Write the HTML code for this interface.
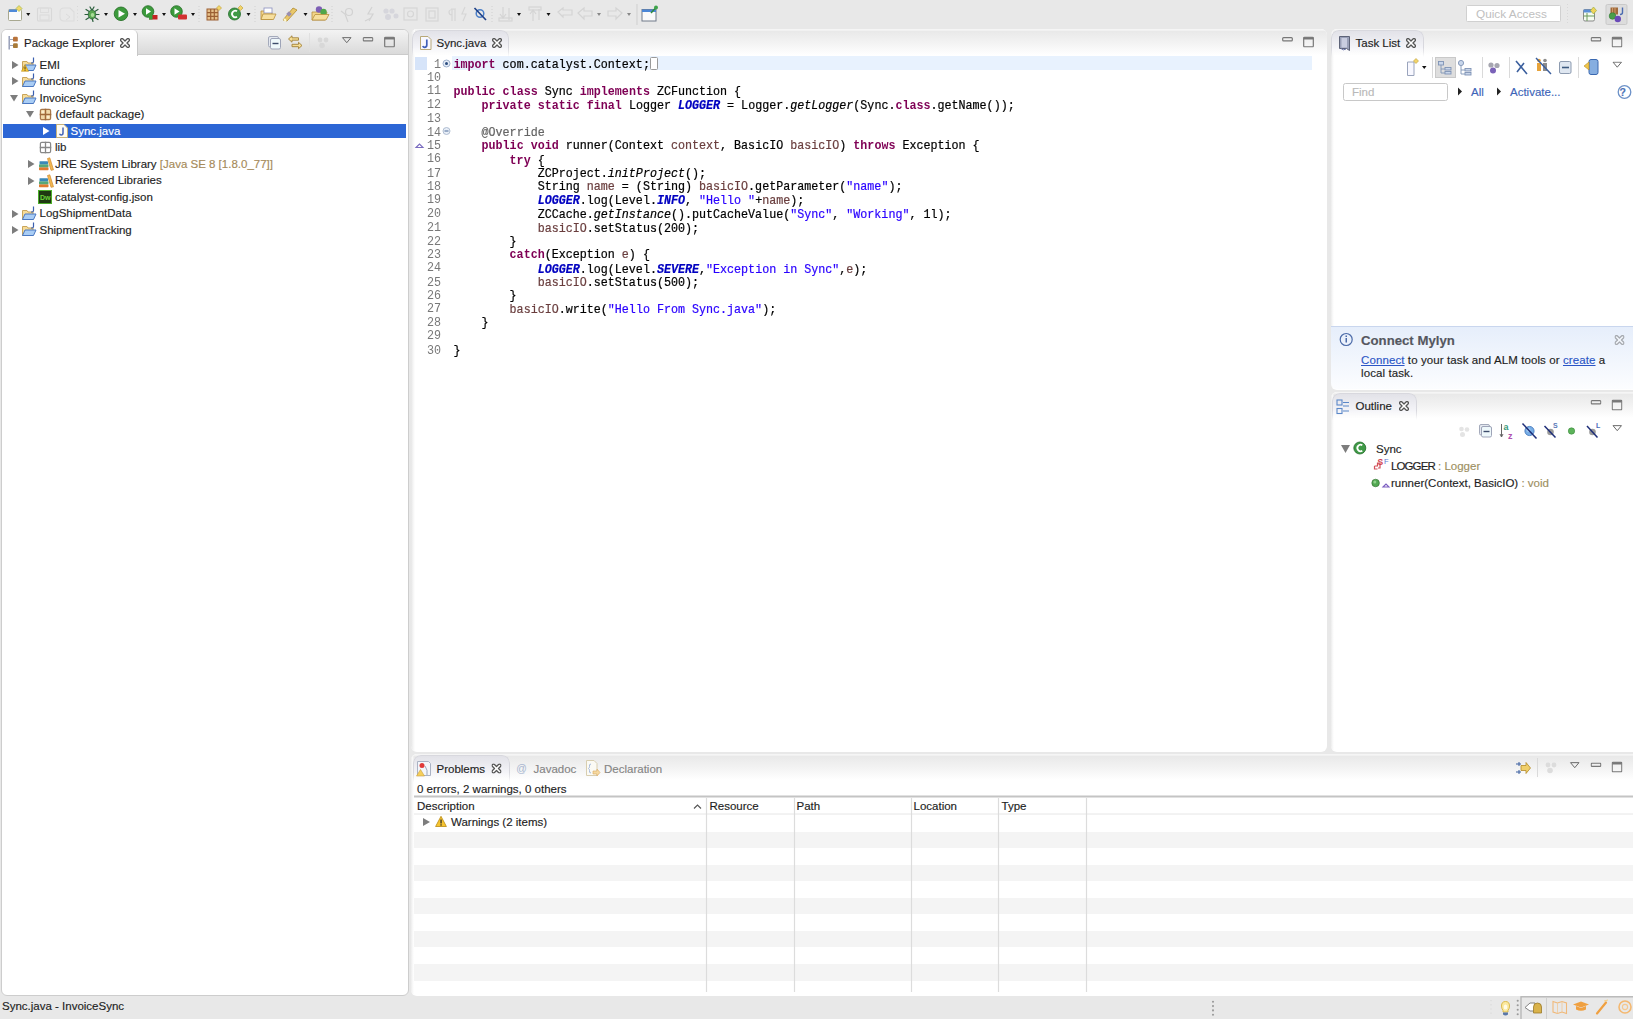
<!DOCTYPE html>
<html><head><meta charset="utf-8">
<style>
*{margin:0;padding:0;box-sizing:border-box}
html,body{width:1633px;height:1019px;overflow:hidden;background:#e8e8e8;font-family:"Liberation Sans",sans-serif;font-size:11.5px;color:#1e1e1e;position:relative}
.a{position:absolute}
.t{position:absolute;white-space:pre;line-height:14px;-webkit-text-stroke:0.15px currentColor}
.panel{position:absolute;background:#fff;border-radius:6px;overflow:hidden}
.code{position:absolute;font-family:"Liberation Mono",monospace;font-size:11.7px;line-height:12.382px;white-space:pre;color:#000;transform:scaleY(1.1);transform-origin:0 0;-webkit-text-stroke:0.2px currentColor}
.ln{position:absolute;font-family:"Liberation Mono",monospace;font-size:11.7px;line-height:12.382px;white-space:pre;color:#787878;text-align:right;transform:scaleY(1.1);transform-origin:0 0}
.k{color:#7f0055;font-weight:bold;-webkit-text-stroke:0}
.s{color:#2a00ff}
.f{color:#0000c0;font-weight:bold;font-style:italic}
.i{font-style:italic}
.v{color:#6a3e3e}
.an{color:#646464}
</style></head><body>

<svg width="0" height="0" style="position:absolute">
<defs>
<symbol id="tri-r" viewBox="0 0 8 8"><path d="M1 0 L7.5 4 L1 8Z" fill="#7d7d7d"/></symbol>
<symbol id="tri-d" viewBox="0 0 8 8"><path d="M0 1 L8 1 L4 7.5Z" fill="#7d7d7d"/></symbol>
<symbol id="proj" viewBox="0 0 16 16">
 <path d="M1.5 4.5 L1.5 13.5 L12 13.5 L12 6 L7 6 L6 4.5Z" fill="#f6dc9a" stroke="#c9a55a" stroke-width="1"/>
 <path d="M1.5 13.5 L4 8 L15 8 L12.5 13.5Z" fill="#a9cdf5" stroke="#4a78c2" stroke-width="1"/>
 <path d="M12.5 0.5 L12.5 4.5 Q12.5 6 11 6 L10 6" fill="none" stroke="#3a5fb0" stroke-width="1.2"/>
</symbol>
<symbol id="pkg" viewBox="0 0 14 14">
 <rect x="1.5" y="1.5" width="11" height="11" rx="1.5" fill="#f0d8a8" stroke="#a8784a" stroke-width="1.3"/>
 <path d="M7 0.8 V13.2 M0.8 7 H13.2" stroke="#a06a3a" stroke-width="1.6"/>
 <rect x="3" y="3" width="2.6" height="2.6" fill="#fbeccc"/><rect x="8.4" y="8.4" width="2.6" height="2.6" fill="#fbeccc"/>
</symbol>
<symbol id="jfile" viewBox="0 0 12 14">
 <path d="M0.5 0.5 H8 L11.5 4 V13.5 H0.5Z" fill="#fdfbf2" stroke="#c8b27a"/>
 <path d="M7 3.5 V9 Q7 11 5.2 11 Q4 11 3.5 9.8" fill="none" stroke="#4163b8" stroke-width="1.5"/>
</symbol>
<symbol id="grid" viewBox="0 0 14 14">
 <rect x="1.5" y="1.5" width="11" height="11" rx="1.5" fill="#fff" stroke="#888" stroke-width="1.3"/>
 <path d="M7 0.8 V13.2 M0.8 7 H13.2" stroke="#888" stroke-width="1.4"/>
</symbol>
<symbol id="lib" viewBox="0 0 16 14">
 <rect x="1" y="10.2" width="9.5" height="3" rx="0.6" fill="#e07a30"/>
 <rect x="1" y="7.2" width="9.5" height="3" rx="0.6" fill="#58a878"/>
 <rect x="1.5" y="4.2" width="8.5" height="3" rx="0.6" fill="#3a88b8"/>
 <path d="M9.5 1.5 L11.8 0.8 L15.5 12.8 L13 13.3Z" fill="#f2b850" stroke="#d08a30" stroke-width="0.7"/>
</symbol>
<symbol id="dw" viewBox="0 0 14 14">
 <rect x="0.5" y="0.5" width="13" height="13" fill="#1f3a12" stroke="#4cae2a"/>
 <text x="2" y="10" font-size="7" fill="#6bd43a" font-family="Liberation Sans" font-weight="bold">Dw</text>
</symbol>
<symbol id="warn" viewBox="0 0 12 12">
 <path d="M6 0.8 L11.4 11 L0.6 11Z" fill="#f7c531" stroke="#b98a12" stroke-width="0.8"/>
 <rect x="5.4" y="4" width="1.3" height="4" fill="#2b2b2b"/><rect x="5.4" y="8.8" width="1.3" height="1.3" fill="#2b2b2b"/>
</symbol>
<symbol id="closex" viewBox="0 0 10 10">
 <path d="M3.02 5 L1.01 2.99 A1.4 1.4 0 0 1 2.99 1.01 L5 3.02 L7.01 1.01 A1.4 1.4 0 0 1 8.99 2.99 L6.98 5 L8.99 7.01 A1.4 1.4 0 0 1 7.01 8.99 L5 6.98 L2.99 8.99 A1.4 1.4 0 0 1 1.01 7.01Z" fill="#fff" stroke="#555" stroke-width="1.3" stroke-linejoin="round"/>
</symbol>
<symbol id="minb" viewBox="0 0 12 6"><rect x="0.75" y="0.75" width="10.5" height="3.5" rx="1" fill="none" stroke="#777" stroke-width="1.3"/></symbol>
<symbol id="maxb" viewBox="0 0 12 12"><rect x="0.75" y="0.75" width="10.5" height="10.5" rx="1" fill="none" stroke="#777" stroke-width="1.3"/><rect x="0.75" y="0.75" width="10.5" height="2.5" fill="#777"/></symbol>
<symbol id="menutri" viewBox="0 0 12 8"><path d="M0.8 0.8 H11.2 L6 7Z" fill="none" stroke="#666" stroke-width="1.2"/></symbol>
</defs></svg>
<!-- TOOLBAR -->
<svg class="a" style="left:0;top:0" width="1633" height="29" viewBox="0 0 1633 29">
 <g id="tbicons">
 <!-- new -->
 <rect x="8.5" y="9.5" width="13" height="11" rx="1" fill="#fbfbfb" stroke="#a8a890"/>
 <rect x="9" y="9.5" width="8" height="2.5" fill="#4f8ad8"/>
 <path d="M19 5.5 L22 8.5 L19 11.5 L16 8.5Z" fill="#f2d86a" stroke="#9fba4a" stroke-width="0.7"/>
 <path d="M26.2 13 H30.3 L28.25 16Z" fill="#111"/>
 <!-- save disabled -->
 <rect x="37.5" y="8" width="14" height="13" rx="1" fill="none" stroke="#d8d8d8" stroke-width="1.1"/>
 <rect x="40.5" y="8" width="8" height="4.5" fill="none" stroke="#dcdcdc" stroke-width="0.9"/>
 <rect x="40" y="15" width="9" height="5" fill="none" stroke="#dadada" stroke-width="0.9"/>
 <path d="M60 12 Q60 8 64 8 L70 8 L74 12 L74 21 L64 21 Q60 21 60 17Z" fill="none" stroke="#dcdcdc" stroke-width="1.1"/>
 <path d="M66 14 L70 17 L66 20" fill="none" stroke="#dcdcdc" stroke-width="1"/>
 <path d="M77.5 6 V23" stroke="#d8d8d8" stroke-dasharray="1 2.5"/>
 <!-- debug -->
 <g stroke="#2a5e3c" stroke-width="1.2" stroke-linecap="round"><path d="M86 9.5 L90 12 M98 9.5 L94 12 M85 14.5 H89 M99 14.5 H95 M86 19.5 L90 17 M98 19.5 L94 17 M90 7 L91.5 9.5 M94 7 L92.5 9.5 M92 18 L93 21.5"/></g>
 <ellipse cx="92" cy="14.5" rx="3.8" ry="4.5" fill="#58a650" stroke="#2a5e3c" stroke-width="0.8"/>
 <ellipse cx="92.5" cy="15" rx="1.8" ry="2" fill="#a8dc98"/>
 <path d="M104 13 H108 L106 16Z" fill="#111"/>
 <!-- run -->
 <circle cx="121" cy="13.8" r="6.8" fill="#3c9a3c" stroke="#1f6b1f" stroke-width="0.8"/>
 <path d="M118.5 10 L125 13.8 L118.5 17.6Z" fill="#fff"/>
 <path d="M133 13 H137 L135 16Z" fill="#111"/>
 <!-- coverage -->
 <circle cx="148" cy="11.5" r="5.8" fill="#3c9a3c" stroke="#1f6b1f" stroke-width="0.8"/>
 <path d="M146 8.3 L151 11.5 L146 14.7Z" fill="#fff"/>
 <rect x="149" y="15" width="8.5" height="4.5" fill="#c42222"/><rect x="149" y="15" width="3.5" height="4.5" fill="#3aa03a"/>
 <path d="M162 13 H166 L164 16Z" fill="#111"/>
 <!-- ext tools -->
 <circle cx="176.5" cy="11.5" r="5.8" fill="#3c9a3c" stroke="#1f6b1f" stroke-width="0.8"/>
 <path d="M174.5 8.3 L179.5 11.5 L174.5 14.7Z" fill="#fff"/>
 <rect x="178" y="14.5" width="9" height="5" rx="1" fill="#d23030"/>
 <path d="M191 13 H195 L193 16Z" fill="#111"/>
 <path d="M199 6 V23" stroke="#d0d0d0" stroke-dasharray="1 2"/>
 <!-- new package -->
 <rect x="207" y="9" width="11" height="11" fill="#e6c08a" stroke="#9b5f33"/>
 <path d="M210.7 9 V20 M214.3 9 V20 M207 12.7 H218 M207 16.3 H218" stroke="#9b5f33" stroke-width="1.2"/>
 <path d="M219 5.5 L221.5 8 L219 10.5 L216.5 8Z" fill="#f3d46a" stroke="#b89a2e" stroke-width="0.6"/>
 <!-- new class -->
 <circle cx="234.5" cy="14" r="6" fill="#3f9a46" stroke="#226b2a" stroke-width="0.8"/>
 <path d="M237 11.3 A3.2 3.2 0 1 0 237 16.7" fill="none" stroke="#fff" stroke-width="1.8"/>
 <path d="M240.5 5.5 L243 8 L240.5 10.5 L238 8Z" fill="#f3d46a" stroke="#b89a2e" stroke-width="0.6"/>
 <path d="M246.5 13 H250.5 L248.5 16Z" fill="#111"/>
 <path d="M255 6 V23" stroke="#d0d0d0" stroke-dasharray="1 2"/>
 <!-- open type -->
 <path d="M261 11 L265 11 L266 12.5 L272 12.5 L272 19.5 L261 19.5Z" fill="#f4d58a" stroke="#b8913c" stroke-width="0.8"/>
 <rect x="264" y="8" width="8" height="5" fill="#fff" stroke="#8a8fbf" stroke-width="0.8"/>
 <path d="M261 19.5 L263 14 L276 14 L273.5 19.5Z" fill="#f7df9e" stroke="#b8913c" stroke-width="0.8"/>
 <!-- search -->
 <path d="M283 20 L293 8 L297 10 L287 21Z" fill="#e9c76a" stroke="#b08a2c" stroke-width="0.8"/>
 <rect x="287" y="12" width="4" height="4" fill="#9a8fb0" transform="rotate(45 289 14)"/>
 <path d="M284 19 L286 21" stroke="#fffbd0" stroke-width="2"/>
 <path d="M303.5 13 H307.5 L305.5 16Z" fill="#111"/>
 <!-- open task -->
 <path d="M312 12 L327 12 L325 20 L312 20Z" fill="#f4d58a" stroke="#b8913c" stroke-width="0.8"/>
 <circle cx="319" cy="9.5" r="3.2" fill="#7d5fb5"/><circle cx="323.5" cy="12" r="3.2" fill="#4fa74a"/>
 <path d="M312 20 L315 14.5 L329 14.5 L326 20Z" fill="#f7df9e" stroke="#b8913c" stroke-width="0.8"/>
 <path d="M332 6 V23" stroke="#d0d0d0" stroke-dasharray="1 2"/>
 <!-- disabled group -->
 <g fill="none" stroke="#d2d2d2" stroke-width="1.2">
  <circle cx="349" cy="12" r="3.5"/><path d="M341 11 L345 14 L348 22"/>
  <path d="M372 7 L368 14 L373 14 L369 21"/><path d="M365 21 L371 18"/>
 </g>
 <g fill="#d6d6dc"><circle cx="386" cy="11" r="2.6"/><circle cx="392" cy="11" r="2.6"/><circle cx="388" cy="17" r="3"/><circle cx="396" cy="16" r="2.5"/></g>
 <g fill="none" stroke="#d6d6d6" stroke-width="1.2">
  <rect x="404" y="8" width="13" height="12"/><circle cx="410.5" cy="14" r="3"/>
  <rect x="426" y="8" width="12" height="13"/><rect x="429" y="11" width="6" height="7"/>
  <path d="M452 9 V21 M455 9 V21 M451 9 H456 Q449 9 449 12 Q449 15 452 15"/>
  <path d="M465 7 L462 14 L466 14 L463 21"/>
 </g>
 <!-- blue crossed -->
 <circle cx="480" cy="13.5" r="3.8" fill="none" stroke="#4a7fc8" stroke-width="1.5"/>
 <path d="M474.5 8 L486 20" stroke="#1d3f86" stroke-width="1.6"/>
 <path d="M492 6 V23" stroke="#d0d0d0" stroke-dasharray="1 2"/>
 <g fill="none" stroke="#d4d4d4" stroke-width="1.2">
  <path d="M503 7 V17 M500 14 L503 18 L506 14"/><rect x="499" y="18" width="13" height="3"/><path d="M509 8 V20"/>
  <path d="M533 21 V11 M530 14 L533 10 L536 14"/><rect x="529" y="7" width="12" height="3"/><path d="M539 9 V20"/>
  <path d="M558 12 L563 8 L563 10 L572 10 L572 15 L563 15 L563 17Z"/>
  <path d="M578 13 L584 8 L584 11 L592 11 L592 16 L584 16 L584 19Z"/>
  <path d="M622 13 L616 8 L616 11 L608 11 L608 16 L616 16 L616 19Z"/>
 </g>
 <path d="M517 13 H521 L519 16Z" fill="#111"/>
 <path d="M546.5 13 H550.5 L548.5 16Z" fill="#111"/>
 <path d="M597 13 H601 L599 16Z" fill="#888"/>
 <path d="M627 13 H631 L629 16Z" fill="#888"/>
 <path d="M637 4 V25" stroke="#cfcfcf" stroke-width="1"/>
 <!-- window pin -->
 <rect x="642" y="9.5" width="14" height="11.5" fill="#fafafa" stroke="#707a8a"/>
 <rect x="642" y="9.5" width="14" height="2.5" fill="#4b86d6"/>
 <path d="M651 13 L656 7.5" stroke="#2e8b3a" stroke-width="1.5"/><circle cx="656" cy="7.5" r="2" fill="#3ea34a"/>
 <!-- quick access -->
 <rect x="1466.5" y="5.5" width="94" height="16" fill="#fff" stroke="#d0d0d0" rx="1"/>
 <text x="1476" y="17.8" font-family="Liberation Sans" font-size="11.8" fill="#c0c0c0">Quick Access</text>
 <path d="M1567.5 4 V24" stroke="#d8d8d8" stroke-dasharray="1 2"/>
 <!-- perspective -->
 <rect x="1583.5" y="9.5" width="11" height="11.5" rx="1.5" fill="#f4fbf0" stroke="#8a8a8a"/>
 <rect x="1583.5" y="9.5" width="8" height="3" fill="#5a8fd8"/>
 <path d="M1583.5 16 H1594.5 M1587 13 V21" stroke="#6a9a5a" stroke-width="1"/>
 <path d="M1593.5 7 L1596.5 10.5 L1593.5 14 L1590.5 10.5Z" fill="#f1d35a" stroke="#9ab040" stroke-width="0.7"/>
 <rect x="1606" y="4.5" width="21" height="20" fill="#dcdcdc" stroke="#c9c9c9" rx="1.5"/>
 <rect x="1610.5" y="7.5" width="7.5" height="7" fill="#a06a3a"/>
 <path d="M1612.5 7.5 V14.5 M1615 7.5 V14.5" stroke="#d9a77a" stroke-width="0.8"/>
 <circle cx="1612.5" cy="16" r="3.3" fill="#4a9e4a" stroke="#2f7a2f" stroke-width="0.6"/>
 <circle cx="1617.8" cy="19" r="3.2" fill="#6a4ab8"/>
 <path d="M1622.5 7.5 V12.5 Q1622.5 14.5 1620 14.5" fill="none" stroke="#4a6ab0" stroke-width="1.4"/>
 </g>
</svg>


<!-- PACKAGE EXPLORER -->
<div class="panel" style="left:1px;top:29px;width:408px;height:967px;border:1px solid #cdcdcd">
  <div class="a" style="left:0;top:0;width:406px;height:25px;background:linear-gradient(#f3f3f3,#dadada);border-bottom:1px solid #cbcbcb"></div>
  <div class="a" style="left:0;top:0;width:136px;height:26px;background:#fff;border-right:1px solid #c8c8c8;border-top-right-radius:5px"></div>
</div>


<!-- TREE -->
<svg class="a" style="left:11px;top:61px" width="8" height="8"><use href="#tri-r"/></svg>
<svg class="a" style="left:21px;top:57px" width="16" height="16"><use href="#proj"/></svg>
<svg class="a" style="left:21px;top:64px" width="8" height="8"><use href="#warn"/></svg>
<div class="t" style="left:39.5px;top:57.9px">EMI</div>
<svg class="a" style="left:11px;top:77px" width="8" height="8"><use href="#tri-r"/></svg>
<svg class="a" style="left:21px;top:73px" width="16" height="16"><use href="#proj"/></svg>
<div class="t" style="left:39.5px;top:74.4px">functions</div>
<svg class="a" style="left:10px;top:94px" width="8" height="8"><use href="#tri-d"/></svg>
<svg class="a" style="left:21px;top:90px" width="16" height="16"><use href="#proj"/></svg>
<div class="t" style="left:39.5px;top:90.8px">InvoiceSync</div>
<svg class="a" style="left:26px;top:110px" width="8" height="8"><use href="#tri-d"/></svg>
<svg class="a" style="left:38.5px;top:107.5px" width="13" height="13"><use href="#pkg"/></svg>
<div class="t" style="left:55.5px;top:107.3px">(default package)</div>
<div class="a" style="left:3px;top:123.5px;width:403px;height:14.5px;background:#2c66d5"></div>
<svg class="a" style="left:42px;top:127px" width="8" height="8"><path d="M1 0 L7.5 4 L1 8Z" fill="#fff"/></svg>
<svg class="a" style="left:55.5px;top:124px" width="12" height="14"><use href="#jfile"/></svg>
<div class="t" style="left:70.5px;top:123.8px;color:#fff">Sync.java</div>
<svg class="a" style="left:38.5px;top:141px" width="13" height="13"><use href="#grid"/></svg>
<div class="t" style="left:55px;top:140.2px">lib</div>
<svg class="a" style="left:27px;top:160px" width="8" height="8"><use href="#tri-r"/></svg>
<svg class="a" style="left:37.5px;top:157px" width="16" height="14"><use href="#lib"/></svg>
<div class="t" style="left:55px;top:156.7px">JRE System Library <span style="color:#a58a5a">[Java SE 8 [1.8.0_77]]</span></div>
<svg class="a" style="left:27px;top:176.5px" width="8" height="8"><use href="#tri-r"/></svg>
<svg class="a" style="left:37.5px;top:173.5px" width="16" height="14"><use href="#lib"/></svg>
<div class="t" style="left:55px;top:173.2px">Referenced Libraries</div>
<svg class="a" style="left:38px;top:190px" width="14" height="14"><use href="#dw"/></svg>
<div class="t" style="left:55px;top:189.7px">catalyst-config.json</div>
<svg class="a" style="left:11px;top:209.5px" width="8" height="8"><use href="#tri-r"/></svg>
<svg class="a" style="left:21px;top:205.5px" width="16" height="16"><use href="#proj"/></svg>
<div class="t" style="left:39.5px;top:206.2px">LogShipmentData</div>
<svg class="a" style="left:11px;top:226px" width="8" height="8"><use href="#tri-r"/></svg>
<svg class="a" style="left:21px;top:222px" width="16" height="16"><use href="#proj"/></svg>
<div class="t" style="left:39.5px;top:222.7px">ShipmentTracking</div>

<!-- EDITOR -->
<div class="panel" style="left:411px;top:29px;width:916px;height:723px">
  <div class="a" style="left:0;top:0;width:916px;height:26px;background:linear-gradient(#f5f5f5 0,#f5f5f5 1px,#e9e9e9 2.5px,#f3f3f3 14px,#fff 26px)"></div>
  <div class="a" style="left:0;top:0;width:4px;height:722px;background:linear-gradient(90deg,#e6e6e6,#f4f4f4 50%,#fff)"></div>
  <div class="a" style="left:41px;top:27.3px;width:860px;height:13.8px;background:#e8f2fe"></div>
  <div class="a" style="left:4px;top:28px;width:12px;height:13px;background:#d6e4f9"></div>
<div class="ln" style="left:0;top:28.8px;width:30px">1</div>
<div class="ln" style="left:0;top:42.4px;width:30px">10
11
12
13
14
15
16
17
18
19
20
21
22
23
24
25
26
27
28
29
30</div>
<div class="code" style="left:42.5px;top:28.8px"><span class="k">import</span> com.catalyst.Context;
 
<span class="k">public</span> <span class="k">class</span> Sync <span class="k">implements</span> ZCFunction {
    <span class="k">private</span> <span class="k">static</span> <span class="k">final</span> Logger <span class="f">LOGGER</span> = Logger.<span class="i">getLogger</span>(Sync.<span class="k">class</span>.getName());
 
    <span class="an">@Override</span>
    <span class="k">public</span> <span class="k">void</span> runner(Context <span class="v">context</span>, BasicIO <span class="v">basicIO</span>) <span class="k">throws</span> Exception {
        <span class="k">try</span> {
            ZCProject.<span class="i">initProject</span>();
            String <span class="v">name</span> = (String) <span class="v">basicIO</span>.getParameter(<span class="s">"name"</span>);
            <span class="f">LOGGER</span>.log(Level.<span class="f">INFO</span>, <span class="s">"Hello "</span>+<span class="v">name</span>);
            ZCCache.<span class="i">getInstance</span>().putCacheValue(<span class="s">"Sync"</span>, <span class="s">"Working"</span>, 1l);
            <span class="v">basicIO</span>.setStatus(200);
        }
        <span class="k">catch</span>(Exception <span class="v">e</span>) {
            <span class="f">LOGGER</span>.log(Level.<span class="f">SEVERE</span>,<span class="s">"Exception in Sync"</span>,<span class="v">e</span>);
            <span class="v">basicIO</span>.setStatus(500);
        }
        <span class="v">basicIO</span>.write(<span class="s">"Hello From Sync.java"</span>);
    }
 
}</div>
</div>

<!-- TASK LIST -->
<div class="panel" style="left:1331px;top:29px;width:310px;height:361px">
  <div class="a" style="left:0;top:0;width:310px;height:26px;background:linear-gradient(#f5f5f5 0,#f5f5f5 1px,#e9e9e9 2.5px,#f3f3f3 14px,#fff 26px)"></div>
  <div class="a" style="left:0;top:0;width:3px;height:100%;background:linear-gradient(90deg,#ececec,#f7f7f7 50%,rgba(255,255,255,0))"></div>
</div>

<!-- OUTLINE -->
<div class="panel" style="left:1331px;top:392px;width:310px;height:360px">
  <div class="a" style="left:0;top:0;width:310px;height:26px;background:linear-gradient(#f5f5f5 0,#f5f5f5 1px,#e9e9e9 2.5px,#f3f3f3 14px,#fff 26px)"></div>
  <div class="a" style="left:0;top:0;width:3px;height:100%;background:linear-gradient(90deg,#ececec,#f7f7f7 50%,rgba(255,255,255,0))"></div>
</div>

<!-- PROBLEMS -->
<div class="panel" style="left:411px;top:754px;width:1230px;height:242px">
  <div class="a" style="left:0;top:0;width:1230px;height:26px;background:linear-gradient(#f5f5f5 0,#f5f5f5 1px,#e9e9e9 2.5px,#f3f3f3 14px,#fff 26px)"></div>
  <div class="a" style="left:0;top:0;width:3px;height:100%;background:linear-gradient(90deg,#ececec,#f7f7f7 50%,rgba(255,255,255,0))"></div>
</div>


<!-- TABS -->
<div class="a" style="left:412px;top:29.5px;width:97px;height:27px;border-radius:8px 8px 0 0;border:1px solid #d8d8de;border-bottom:none;background:linear-gradient(#e2e2e8,#f3f3f7 60%,#fff);-webkit-mask-image:linear-gradient(#000 65%,transparent)"></div>
<div class="a" style="left:1331px;top:29.5px;width:93px;height:27px;border-radius:8px 8px 0 0;border:1px solid #d8d8de;border-bottom:none;background:linear-gradient(#e2e2e8,#f3f3f7 60%,#fff);-webkit-mask-image:linear-gradient(#000 65%,transparent)"></div>
<div class="a" style="left:1331.5px;top:392.5px;width:85px;height:27px;border-radius:8px 8px 0 0;border:1px solid #d8d8de;border-bottom:none;background:linear-gradient(#e2e2e8,#f3f3f7 60%,#fff);-webkit-mask-image:linear-gradient(#000 65%,transparent)"></div>
<div class="a" style="left:412.5px;top:755px;width:97px;height:27px;border-radius:8px 8px 0 0;border:1px solid #d8d8de;border-bottom:none;background:linear-gradient(#e2e2e8,#f3f3f7 60%,#fff);-webkit-mask-image:linear-gradient(#000 65%,transparent)"></div>
<!-- MYLYN -->
<div class="a" style="left:1331px;top:326px;width:302px;height:63px;border-radius:0 0 0 6px;border-top:1px solid #c9d6ee;background:linear-gradient(#e6eefb,#f3f7fd 60%,#fcfdff)"></div>
<!-- STRIPES -->
<div class="a" style="left:414px;top:831.5px;width:1219px;height:16.4px;background:#f4f4f4"></div>
<div class="a" style="left:414px;top:864.7px;width:1219px;height:16.4px;background:#f4f4f4"></div>
<div class="a" style="left:414px;top:897.9px;width:1219px;height:16.4px;background:#f4f4f4"></div>
<div class="a" style="left:414px;top:931.1px;width:1219px;height:16.4px;background:#f4f4f4"></div>
<div class="a" style="left:414px;top:964.3px;width:1219px;height:16.4px;background:#f4f4f4"></div>

<!-- OVERLAY ICONS -->
<svg class="a" style="left:0;top:0" width="1633" height="1019" viewBox="0 0 1633 1019">
 <!-- Package explorer header -->
 <path d="M9.2 36 V49.5" stroke="#8f98b4" stroke-width="1.4"/>
 <path d="M9.2 39.5 H13 M9.2 45.5 H13" stroke="#a0a6b8" stroke-width="1"/>
 <rect x="13" y="36.8" width="4.8" height="4.8" rx="1.2" fill="#b8733a"/><rect x="13" y="43.3" width="4.8" height="4.8" rx="1.2" fill="#a87a38"/>
 <use href="#closex" x="120" y="38" width="10" height="10"/>
 <rect x="268.5" y="36.5" width="10" height="10.5" rx="1.5" fill="#e4e8f0" stroke="#a4aabb"/>
 <rect x="270.5" y="38.5" width="10" height="10.5" rx="1.5" fill="#eef8fb" stroke="#9ea4b8"/>
 <path d="M272.5 43.5 H278.5" stroke="#3c4c6c" stroke-width="1.4"/>
 <path d="M288.5 39 L292 35.8 L292 37.8 L298.5 37.8 L298.5 40.2 L292 40.2 L292 42.2Z" fill="#f6de94" stroke="#a08038" stroke-width="0.9" stroke-linejoin="round"/>
 <path d="M302 45.5 L298.5 42.3 L298.5 44.3 L292 44.3 L292 46.7 L298.5 46.7 L298.5 48.7Z" fill="#f6de94" stroke="#a08038" stroke-width="0.9" stroke-linejoin="round"/>
 <path d="M309.5 33 V52" stroke="#e0e0e0"/>
 <g fill="#d8d8d8"><circle cx="320" cy="40" r="2.4"/><circle cx="326" cy="40" r="2.4"/><circle cx="322" cy="45.5" r="2.8"/></g>
 <use href="#menutri" x="341" y="37" width="11.5" height="6.5"/>
 <use href="#minb" x="362.5" y="37" width="11" height="5.5"/>
 <use href="#maxb" x="384" y="36.5" width="11" height="11"/>

 <!-- Editor header -->
 <path d="M420.5 36.5 H428 L431 39.5 V49.5 H420.5Z" fill="#f8f8ff" stroke="#b8a878"/>
 <path d="M426.8 39.5 V45 Q426.8 47.3 424.6 47.3 Q423.3 47.3 422.8 46" fill="none" stroke="#3f5fb8" stroke-width="1.7"/>
 <use href="#closex" x="492" y="38" width="10" height="10"/>
 <use href="#minb" x="1282" y="37" width="11" height="5.5"/>
 <use href="#maxb" x="1303" y="36.5" width="11" height="11"/>
 <!-- editor gutter -->
 <circle cx="446.5" cy="63.5" r="3.5" fill="#e4ecf7" stroke="#8aa0c0" stroke-width="0.8"/><circle cx="446.5" cy="63.5" r="1.5" fill="#2b4c7e"/>
 <circle cx="446.5" cy="131" r="3.5" fill="#e8eef7" stroke="#9fb0c8" stroke-width="0.8"/><path d="M444.5 131 H448.5" stroke="#4a6a98" stroke-width="1"/>
 <path d="M416 147.5 L419.5 144 L423 147.5Z" fill="none" stroke="#7a6cc0" stroke-width="1.1"/>
 <rect x="650.5" y="57.5" width="7" height="12" fill="#fff" stroke="#9a9a9a" rx="1"/>

 <!-- Task list header -->
 <path d="M1339.5 36.5 H1349.5 V50.5 L1346.5 48.5 H1339.5 Z" fill="#9aa0b8" stroke="#5d6378"/>
 <rect x="1341.5" y="38" width="5.5" height="9.5" fill="#c9cde0"/>
 <path d="M1341 48.5 Q1343 51 1346 49" fill="none" stroke="#6a74a8" stroke-width="1"/>
 <use href="#closex" x="1406" y="38" width="10" height="10"/>
 <use href="#minb" x="1590.5" y="37" width="11" height="5.5"/>
 <use href="#maxb" x="1611.5" y="36.5" width="11" height="11"/>
 <!-- task list toolbar -->
 <path d="M1407.5 62 L1414 62 L1414 75.5 L1407.5 75.5Z" fill="#f8f8ff" stroke="#9aa4bc"/>
 <path d="M1416 58.5 L1418.5 61 L1416 63.5 L1413.5 61Z" fill="#f3d46a" stroke="#b89a2e" stroke-width="0.6"/>
 <path d="M1422 66 H1426.5 L1424.25 69Z" fill="#111"/>
 <path d="M1432.5 57 V78" stroke="#dadada"/>
 <rect x="1435.5" y="57.5" width="20" height="20" fill="#dedede" stroke="#c9c9c9"/>
 <g stroke="#7e93b5" fill="#c9d6ea" stroke-width="0.9">
  <rect x="1438.5" y="61.5" width="5" height="3.5"/><path d="M1441 65 V73 H1445 M1441 69 H1445" fill="none"/><rect x="1445" y="67.5" width="6" height="2.5"/><rect x="1445" y="71.5" width="6" height="2.5"/>
  <circle cx="1461" cy="63" r="2.6"/><path d="M1461 66 V74 H1465 M1461 70 H1465" fill="none"/><rect x="1465" y="68.5" width="6" height="2.5"/><rect x="1465" y="72.5" width="6" height="2.5"/>
 </g>
 <path d="M1482.5 57 V78" stroke="#dadada"/>
 <g fill="#a6a6b0"><circle cx="1491" cy="65" r="2.6"/><circle cx="1497" cy="65.5" r="2.6"/></g><circle cx="1493" cy="70.5" r="3" fill="#7a62b8"/>
 <path d="M1509.5 57 V78" stroke="#dadada"/>
 <path d="M1516 61 L1527 74 M1517 72 L1524 63" stroke="#3b5f9e" stroke-width="1.6"/>
 <circle cx="1539" cy="60.5" r="1.8" fill="#e7a33a"/><rect x="1537" y="63" width="4" height="8" fill="#e7a33a"/>
 <circle cx="1545" cy="60.5" r="1.8" fill="#8c8c8c"/><rect x="1543" y="63" width="4" height="8" fill="#8c8c8c"/>
 <path d="M1536 58 L1551 74" stroke="#3b5f9e" stroke-width="1.4"/>
 <rect x="1559.5" y="61.5" width="11.5" height="12" rx="1.5" fill="#dfe7f1" stroke="#8d9bb0"/>
 <path d="M1562 67.5 H1569" stroke="#3c5a80" stroke-width="1.6"/>
 <path d="M1578.5 57 V78" stroke="#dadada"/>
 <rect x="1589" y="59.5" width="9" height="15" rx="2" fill="#86aee0" stroke="#3a68b0"/>
 <path d="M1584 66 L1589 62 L1589 70Z" fill="#f0c64a" stroke="#b38a2a" stroke-width="0.6"/>
 <use href="#menutri" x="1611.5" y="61.5" width="11.5" height="6.5"/>
 <!-- find row -->
 <rect x="1343.5" y="83.5" width="104" height="17" rx="2" fill="#fff" stroke="#c8c8c8"/>
 <path d="M1458 87.5 L1462 91.5 L1458 95.5Z" fill="#222"/>
 <path d="M1497 87.5 L1501 91.5 L1497 95.5Z" fill="#222"/>
 <circle cx="1624.5" cy="92" r="6.3" fill="#fff" stroke="#6d92c8" stroke-width="1.3"/>

 <!-- Mylyn -->
 <circle cx="1346.2" cy="339.5" r="6" fill="none" stroke="#4b6aa8" stroke-width="1.2"/>
 <rect x="1345.5" y="338" width="1.5" height="4.5" fill="#4b6aa8"/><rect x="1345.5" y="335.5" width="1.5" height="1.5" fill="#4b6aa8"/>
 <use href="#closex" x="1614.5" y="335" width="10" height="10" style="opacity:0.45"/>

 <!-- Outline header -->
 <rect x="1337" y="400" width="5" height="5" fill="none" stroke="#5b88c8" stroke-width="1.1"/>
 <rect x="1337" y="408.5" width="5" height="5" fill="none" stroke="#5b88c8" stroke-width="1.1"/>
 <path d="M1343 402.5 H1349 M1343 406 H1349 M1343 411 H1349" stroke="#5b88c8" stroke-width="1.1"/>
 <use href="#closex" x="1399" y="401" width="10" height="10"/>
 <use href="#minb" x="1590.5" y="400" width="11" height="5.5"/>
 <use href="#maxb" x="1611.5" y="399.5" width="11" height="11"/>
 <!-- outline toolbar -->
 <rect x="1479.5" y="424.5" width="10" height="10.5" rx="1.5" fill="#e4e8f0" stroke="#a4aabb"/>
 <rect x="1481.5" y="426.5" width="10" height="10.5" rx="1.5" fill="#eef8fb" stroke="#9ea4b8"/>
 <path d="M1483.5 431.5 H1489.5" stroke="#3c4c6c" stroke-width="1.4"/>
 <path d="M1501.5 424 V436 M1500 434 L1501.5 437 L1503 434" fill="none" stroke="#555" stroke-width="0.9"/>
 <text x="1503.5" y="429.5" font-size="9" font-family="Liberation Sans" font-weight="bold" fill="#3a9a7a">a</text>
 <text x="1508" y="438.5" font-size="9" font-family="Liberation Sans" font-weight="bold" fill="#b050b0">z</text>
 <circle cx="1529.5" cy="431" r="4.6" fill="#78aee6" stroke="#3a70b8" stroke-width="0.8"/>
 <circle cx="1528.5" cy="430" r="2" fill="#a8d0f4"/>
 <path d="M1522.5 423.5 L1536.5 438.5" stroke="#1e2e78" stroke-width="1.5"/>
 <circle cx="1550.5" cy="432" r="3.3" fill="#9a9a9a"/>
 <path d="M1544.5 426 L1555.5 437.5" stroke="#1e2e78" stroke-width="1.5"/>
 <text x="1553" y="427.5" font-size="7" font-family="Liberation Sans" font-weight="bold" fill="#5a7ab8">S</text>
 <circle cx="1571.5" cy="431" r="3.2" fill="#5cb35a" stroke="#3a8a3a" stroke-width="0.6"/>
 <circle cx="1592.5" cy="432" r="3.3" fill="#9a9a9a"/>
 <path d="M1587 426 L1597.5 437.5" stroke="#1e2e78" stroke-width="1.5"/>
 <text x="1596" y="428" font-size="7" font-family="Liberation Sans" font-weight="bold" fill="#4a6ab8">L</text>
 <g fill="#e4e4e4"><circle cx="1461.5" cy="429" r="2.3"/><circle cx="1467" cy="429.5" r="2.3"/><circle cx="1462.5" cy="434.5" r="2.5"/></g>
 <use href="#menutri" x="1611.5" y="425" width="11.5" height="6.5"/>
 <!-- outline tree -->
 <path d="M1341 445 H1350 L1345.5 453Z" fill="#7d7d7d"/>
 <circle cx="1359.8" cy="448" r="6" fill="#3f9a46" stroke="#226b2a" stroke-width="0.8"/>
 <path d="M1362.3 445.3 A3.2 3.2 0 1 0 1362.3 450.7" fill="none" stroke="#fff" stroke-width="1.8"/>
 <path d="M1374.5 466 h3 v-3 h2.5 v5 h-2 M1374.5 466 v3 h3" fill="none" stroke="#d2505a" stroke-width="1.2"/>
 <text x="1377.5" y="465" font-size="8.5" font-family="Liberation Sans" font-weight="bold" fill="#d04050">S</text>
 <text x="1384" y="463.5" font-size="7.5" font-family="Liberation Sans" fill="#5a7ad0">F</text>
 <circle cx="1375.6" cy="483" r="3.8" fill="#52a852" stroke="#2d6a2a" stroke-width="0.6"/>
 <circle cx="1374.8" cy="482" r="1.5" fill="#8fd08a"/>
 <path d="M1383 487 L1386 484 L1389 487Z" fill="none" stroke="#7a5cc0" stroke-width="1.1"/>

 <!-- Problems header -->
 <path d="M417.5 761.5 H428.5 L430.5 763.5 V775.5 H417.5Z" fill="#f4f6fa" stroke="#aab2c4"/>
 <path d="M425 766 Q428 770 427 775" fill="none" stroke="#9aa6bc" stroke-width="1"/>
 <circle cx="422" cy="765.5" r="2.5" fill="#e03a3a"/>
 <path d="M416.5 776 L420.5 769.5 L424.5 776Z" fill="#f6cf5a" stroke="#c9a040" stroke-width="0.6"/>
 <use href="#closex" x="491.5" y="763.5" width="10" height="10"/>
 <text x="516" y="772" font-size="10.5" font-family="Liberation Sans" font-style="italic" fill="#a9b7d0">@</text>
 <path d="M586.5 760.5 H594 L597 763.5 V775.5 H586.5Z" fill="#fbfaf4" stroke="#d8ceb0"/>
 <path d="M591 764 Q589 764 589.5 766.5 Q589.5 768 588.5 768.5 Q589.5 769 589.5 770.5 Q589 773 591 773" fill="none" stroke="#9ab0d8" stroke-width="0.9"/>
 <path d="M593 771 H597 V769 L600 772.5 L597 776 V774 H593Z" fill="#f6d9a0" stroke="#d8a860" stroke-width="0.6"/>
 <path d="M1516 764 H1521 M1516 772 H1521" stroke="#3b5fa0" stroke-width="1.2"/>
 <path d="M1519 762 V766 M1519 770 V774" stroke="#3b5fa0" stroke-width="1"/>
 <path d="M1521 765.5 L1526 765.5 L1526 762.5 L1530.5 768 L1526 773.5 L1526 770.5 L1521 770.5Z" fill="#f0cf6a" stroke="#b38a2a" stroke-width="0.8"/>
 <path d="M1537.5 758 V777" stroke="#dadada"/>
 <g fill="#dcdcdc"><circle cx="1548" cy="765" r="2.4"/><circle cx="1554" cy="765" r="2.4"/><circle cx="1550" cy="770.5" r="2.8"/></g>
 <use href="#menutri" x="1569" y="762" width="11.5" height="6.5"/>
 <use href="#minb" x="1590.5" y="762.5" width="11" height="5.5"/>
 <use href="#maxb" x="1611.5" y="761.5" width="11" height="11"/>
 <!-- problems table -->
 <path d="M414 796.5 H1633" stroke="#c4c4c4" stroke-width="2"/>
 <path d="M414 814 H1633" stroke="#e6e6e6" stroke-width="1"/>
 <g stroke="#dcdcdc" stroke-width="1.2"><path d="M706.5 798 V992 M794.5 798 V992 M911.5 798 V992 M998.5 798 V992 M1086.5 798 V992"/></g>
 <path d="M694 808.5 L697.5 805 L701 808.5" fill="none" stroke="#555" stroke-width="1.1"/>
 <path d="M423 818 L430 822 L423 826Z" fill="#7d7d7d"/>
 <use href="#warn" x="435" y="815.5" width="12" height="12"/>

 <!-- Status bar -->
 <g fill="#9a9a9a"><circle cx="1213" cy="1001.8" r="1.05"/><circle cx="1213" cy="1006.1" r="1.05"/><circle cx="1213" cy="1010.4" r="1.05"/><circle cx="1213" cy="1014.7" r="1.05"/></g>
 <path d="M1491 1000 V1015" stroke="#d6d6d6" stroke-dasharray="1.2 3"/>
 <g fill="#9a9a9a"><circle cx="1517.7" cy="1000.8" r="1.05"/><circle cx="1517.7" cy="1005.3" r="1.05"/><circle cx="1517.7" cy="1009.8" r="1.05"/><circle cx="1517.7" cy="1014.3" r="1.05"/></g>
 <path d="M1501.5 1006 Q1501.5 1001.5 1505.5 1001.5 Q1509.5 1001.5 1509.5 1006 Q1509.5 1008.5 1508 1010.5 V1012 H1503 V1010.5 Q1501.5 1008.5 1501.5 1006Z" fill="#fbe9a0" stroke="#d9b640" stroke-width="0.9"/>
 <ellipse cx="1505.5" cy="1007" rx="1.8" ry="2.5" fill="#fffbea"/>
 <path d="M1503 1012.5 H1508 V1014.5 Q1505.5 1016.5 1503 1014.5Z" fill="#5a78a8"/>
 <rect x="1521" y="996.8" width="115" height="24" fill="none" stroke="#b4b4b4" stroke-width="1.3"/>
 <path d="M1525 1007.5 L1530 1003 L1535 1003 L1535 1011 L1530 1011Z" fill="#fff" stroke="#777" stroke-width="0.9"/>
 <path d="M1533.5 1013 V1007 Q1533.5 1003 1537.5 1003 Q1541.5 1003 1541.5 1007 V1013Z" fill="#d9b24a" stroke="#9a7a2a" stroke-width="0.8"/>
 <path d="M1546.5 997.5 V1019" stroke="#d0d0d0"/>
 <path d="M1553 1001.5 L1557.5 1003 L1562 1001.5 L1566.5 1003 V1013.5 L1562 1012 L1557.5 1013.5 L1553 1012Z" fill="none" stroke="#f0b878" stroke-width="1.1"/>
 <path d="M1557.5 1003 V1013.5 M1562 1001.5 V1012" stroke="#f0c898" stroke-width="0.8"/>
 <path d="M1573 1004.5 L1581 1001.5 L1589 1004.5 L1581 1007.5Z" fill="#f0a040"/><path d="M1576 1006 V1009.5 Q1581 1012 1586 1009.5 V1006 L1581 1008Z" fill="#f0a040"/>
 <path d="M1597 1013.5 L1606 1002.5" stroke="#f0a040" stroke-width="2.2" stroke-linecap="round"/><path d="M1604 1001 L1608 1000" stroke="#f8d080" stroke-width="1"/>
 <circle cx="1625" cy="1007" r="6" fill="none" stroke="#f4b870" stroke-width="1.6"/><circle cx="1625" cy="1007" r="2.6" fill="none" stroke="#f4c890" stroke-width="1.1"/>
</svg>

<!-- HEADER TEXTS -->
<div class="t" style="left:24px;top:36px">Package Explorer</div>
<div class="t" style="left:436.5px;top:36px">Sync.java</div>
<div class="t" style="left:1355.5px;top:36px">Task List</div>
<div class="t" style="left:1352px;top:85px;color:#b9b9b9">Find</div>
<div class="t" style="left:1471px;top:85px;color:#3d64b8">All</div>
<div class="t" style="left:1510px;top:85px;color:#3d64b8">Activate...</div>
<div class="t" style="left:1619.5px;top:85px;color:#4d74b8;font-weight:bold;font-size:10.5px">?</div>
<div class="t" style="left:1361px;top:333px;font-weight:bold;font-size:13.2px;color:#55575f;line-height:16px">Connect Mylyn</div>
<div class="t" style="left:1361px;top:354px;line-height:12.6px;letter-spacing:0.1px"><span style="color:#2b55c6;text-decoration:underline">Connect</span> to your task and ALM tools or <span style="color:#2b55c6;text-decoration:underline">create</span> a
local task.</div>
<div class="t" style="left:1355.5px;top:399px">Outline</div>
<div class="t" style="left:1376px;top:442px">Sync</div>
<div class="t" style="left:1391px;top:458.5px"><span style="letter-spacing:-0.9px">LOGGER</span> <span style="color:#9d8f5f">: Logger</span></div>
<div class="t" style="left:1391px;top:475.5px">runner(Context, BasicIO) <span style="color:#9d8f5f">: void</span></div>
<div class="t" style="left:436.5px;top:761.5px">Problems</div>
<div class="t" style="left:533.5px;top:761.5px;color:#858585">Javadoc</div>
<div class="t" style="left:604px;top:761.5px;color:#858585">Declaration</div>
<div class="t" style="left:417px;top:782px">0 errors, 2 warnings, 0 others</div>
<div class="t" style="left:417px;top:798.5px">Description</div>
<div class="t" style="left:709.5px;top:798.5px">Resource</div>
<div class="t" style="left:796.5px;top:798.5px">Path</div>
<div class="t" style="left:913.5px;top:798.5px">Location</div>
<div class="t" style="left:1001.5px;top:798.5px">Type</div>
<div class="t" style="left:451px;top:815px">Warnings (2 items)</div>

<!-- STATUS -->
<div class="t" style="left:2px;top:999px">Sync.java - InvoiceSync</div>

</body></html>
